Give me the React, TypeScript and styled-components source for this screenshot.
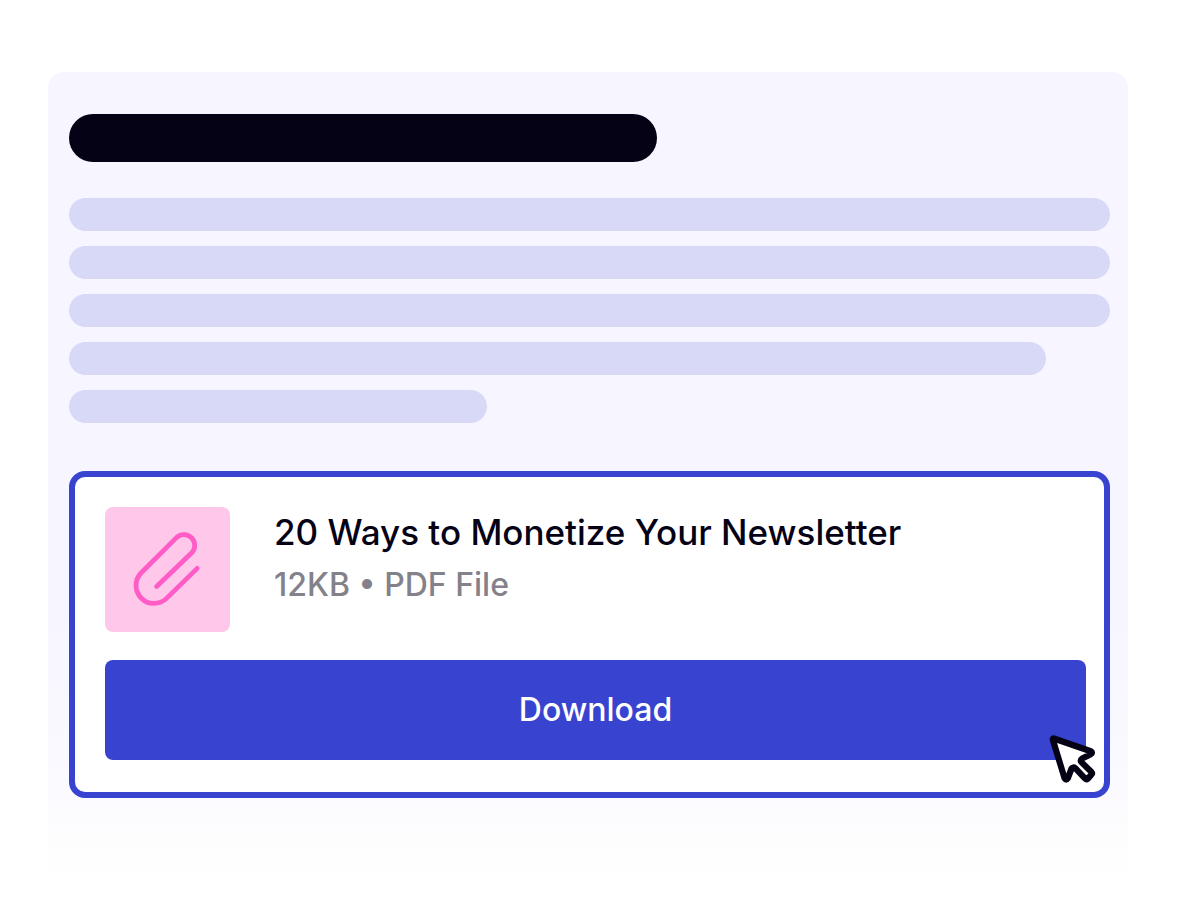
import React from "react";
import styled, { createGlobalStyle } from "styled-components";

const GlobalStyle = createGlobalStyle`
  *, *::before, *::after { box-sizing: border-box; }
  body {
    margin: 0;
    background: #fff;
    color: #050216;
    font-family: Inter, "Liberation Sans", sans-serif;
  }
`;

const Page = styled.main`
  padding: 72px 51px 0 48px;
`;

const Article = styled.article`
  padding: 42px 18px 90px 21px;
  border-radius: 16px;
  background: linear-gradient(to bottom, #f7f5ff 0, #f7f5ff 66%, #fbfaff 88%, #fefefe 96%, #fff 100%);
`;

const HeadingBar = styled.div`
  width: 56.5%;
  height: 48px;
  border-radius: 24px;
  background: #050216;
`;

const Lines = styled.div`
  display: flex;
  flex-direction: column;
  gap: 15px;
  margin: 36px 0 48px;
`;

const Line = styled.div<{ $width: string }>`
  width: ${({ $width }) => $width};
  height: 33px;
  border-radius: 17px;
  background: #d8d9f7;
`;

const FileCard = styled.section`
  position: relative;
  padding: 30px 18px 32px 30px;
  border: 6px solid #3843d0;
  border-radius: 16px;
  background: #fff;
`;

const FileRow = styled.div`
  display: flex;
  gap: 44px;
  margin-bottom: 28px;
`;

const Thumb = styled.div`
  flex: none;
  width: 125px;
  height: 125px;
  border-radius: 8px;
  background: #ffc7ea;
`;

const FileInfo = styled.div`
  display: flex;
  flex-direction: column;
  gap: 8px;
  padding-top: 1px;
`;

const FileName = styled.h2`
  margin: 0;
  font-size: 35px;
  line-height: 48px;
  font-weight: 550;
`;

const FileMeta = styled.p`
  margin: 0;
  font-size: 32px;
  line-height: 42px;
  font-weight: 550;
  color: #838189;
`;

const DownloadButton = styled.button`
  display: block;
  width: 100%;
  height: 100px;
  padding: 0;
  border: 0;
  border-radius: 8px;
  background: #3843d0;
  color: #fff;
  font: inherit;
  font-size: 32px;
  line-height: 42px;
  font-weight: 550;
  cursor: pointer;
`;

const Pointer = styled.svg`
  position: absolute;
  right: 6px;
  bottom: 6px;
  width: 50px;
  height: 52px;
  pointer-events: none;
`;

const lineWidths = ["100%", "100%", "100%", "93.9%", "40.2%"];

export default function App() {
  return (
    <>
      <GlobalStyle />
      <Page>
        <Article>
          <HeadingBar />
          <Lines>
            {lineWidths.map((width, index) => (
              <Line key={index} $width={width} />
            ))}
          </Lines>
          <FileCard>
            <FileRow>
              <Thumb>
                <svg width="125" height="125" viewBox="0 0 125 125" fill="none" aria-hidden="true">
                  <path
                    d="M92.2 61.4L61.5 91.4A18 18 0 0 1 36 66L71.7 30.4A10.8 10.8 0 0 1 87 45.6L51.6 79.4"
                    stroke="#ff5cc6"
                    strokeWidth="4.8"
                    strokeLinecap="round"
                    strokeLinejoin="round"
                  />
                </svg>
              </Thumb>
              <FileInfo>
                <FileName>20 Ways to Monetize Your Newsletter</FileName>
                <FileMeta>12KB • PDF File</FileMeta>
              </FileInfo>
            </FileRow>
            <DownloadButton type="button">Download</DownloadButton>
            <Pointer viewBox="0 0 50 52" aria-hidden="true">
              <path
                d="M5.9 4.5L42.8 17.3Q45.2 18.7 42.8 20.2L34.2 24.6Q31.6 26.4 33.6 28.4L43.2 37.7Q44.8 39.3 43.2 40.9L39.9 44.6Q38.4 45.9 36.9 44.4L27.3 34.2Q25 32.4 23.4 34.8L19.8 44.4Q18.2 46.8 16.6 44.4L4.9 6Q4.4 4.2 5.9 4.5Z"
                fill="#fff"
                stroke="#050216"
                strokeWidth="6.2"
                strokeLinejoin="round"
              />
            </Pointer>
          </FileCard>
        </Article>
      </Page>
    </>
  );
}
